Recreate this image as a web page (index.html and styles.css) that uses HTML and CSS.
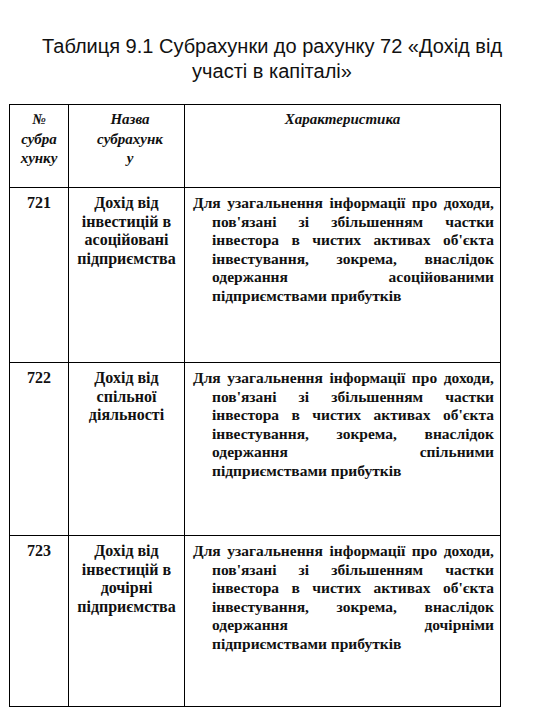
FILE: index.html
```html
<!DOCTYPE html>
<html lang="uk">
<head>
<meta charset="utf-8">
<title>Таблиця 9.1</title>
<link rel="stylesheet" href="styles.css">
</head>
<body>
<h1 class="title">Таблиця 9.1 Субрахунки до рахунку 72 «Дохід від<br>участі в капіталі»</h1>
<table class="tbl">
  <colgroup>
    <col class="c1">
    <col class="c2">
    <col class="c3">
  </colgroup>
  <tr class="head">
    <th class="h1">№<br>субра<br>хунку</th>
    <th class="h2">Назва<br>субрахунк<br>у</th>
    <th class="h3">Характеристика</th>
  </tr>
  <tr class="row r1">
    <td class="num">721</td>
    <td class="name">Дохід від інвестицій в асоційовані підприємства</td>
    <td class="desc">
      <span class="ln first">Для узагальнення інформації про доходи,</span>
      <span class="ln">пов'язані зі збільшенням частки</span>
      <span class="ln">інвестора в чистих активах об'єкта</span>
      <span class="ln">інвестування, зокрема, внаслідок</span>
      <span class="ln">одержання асоційованими</span>
      <span class="ln last">підприємствами прибутків</span>
    </td>
  </tr>
  <tr class="row r2">
    <td class="num">722</td>
    <td class="name">Дохід від спільної діяльності</td>
    <td class="desc">
      <span class="ln first">Для узагальнення інформації про доходи,</span>
      <span class="ln">пов'язані зі збільшенням частки</span>
      <span class="ln">інвестора в чистих активах об'єкта</span>
      <span class="ln">інвестування, зокрема, внаслідок</span>
      <span class="ln">одержання спільними</span>
      <span class="ln last">підприємствами прибутків</span>
    </td>
  </tr>
  <tr class="row r3">
    <td class="num">723</td>
    <td class="name">Дохід від інвестицій в дочірні підприємства</td>
    <td class="desc">
      <span class="ln first">Для узагальнення інформації про доходи,</span>
      <span class="ln">пов'язані зі збільшенням частки</span>
      <span class="ln">інвестора в чистих активах об'єкта</span>
      <span class="ln">інвестування, зокрема, внаслідок</span>
      <span class="ln">одержання дочірніми</span>
      <span class="ln last">підприємствами прибутків</span>
    </td>
  </tr>
</table>
</body>
</html>
```
FILE: styles.css
```css
html, body {
  margin: 0;
  padding: 0;
  background: #fff;
}
body {
  width: 540px;
  color: #111;
}
.title {
  margin: 34px 0 0 0;
  font-family: "Liberation Sans", Arial, sans-serif;
  font-weight: normal;
  font-size: 20px;
  line-height: 25px;
  text-align: center;
  padding-left: 4px;
}
.tbl {
  margin: 20px 0 0 9px;
  width: 491px;
  border-collapse: collapse;
  table-layout: fixed;
  font-family: "Liberation Serif", "Times New Roman", serif;
  color: #111;
}
.c1 { width: 59px; }
.c2 { width: 116px; }
.c3 { width: 316px; }
.tbl th, .tbl td {
  border: 1.5px solid #000;
  vertical-align: top;
  padding: 0;
}
.head th {
  height: 77px;
  font-style: italic;
  font-weight: bold;
  font-size: 15px;
  line-height: 19.5px;
  padding-top: 5px;
  text-align: center;
}
.h2 {
  padding-left: 7px !important;
}
.row td {
  font-size: 16px;
  font-weight: bold;
  line-height: 18.6px;
  padding-top: 6px;
}
.r1 td { height: 168px; }
.r2 td { height: 166px; }
.r3 td { height: 164px; }
.num {
  text-align: center;
}
.name {
  text-align: center;
  padding-left: 4px !important;
  padding-right: 4px !important;
}
.row .desc {
  font-size: 15.5px;
  padding-left: 8px;
  padding-right: 6px;
}
.ln {
  display: block;
  margin-left: 19px;
  text-align: justify;
  text-align-last: justify;
}
.ln.first {
  margin-left: 0;
  word-spacing: -1px;
}
.ln.last {
  text-align-last: left;
}
```
